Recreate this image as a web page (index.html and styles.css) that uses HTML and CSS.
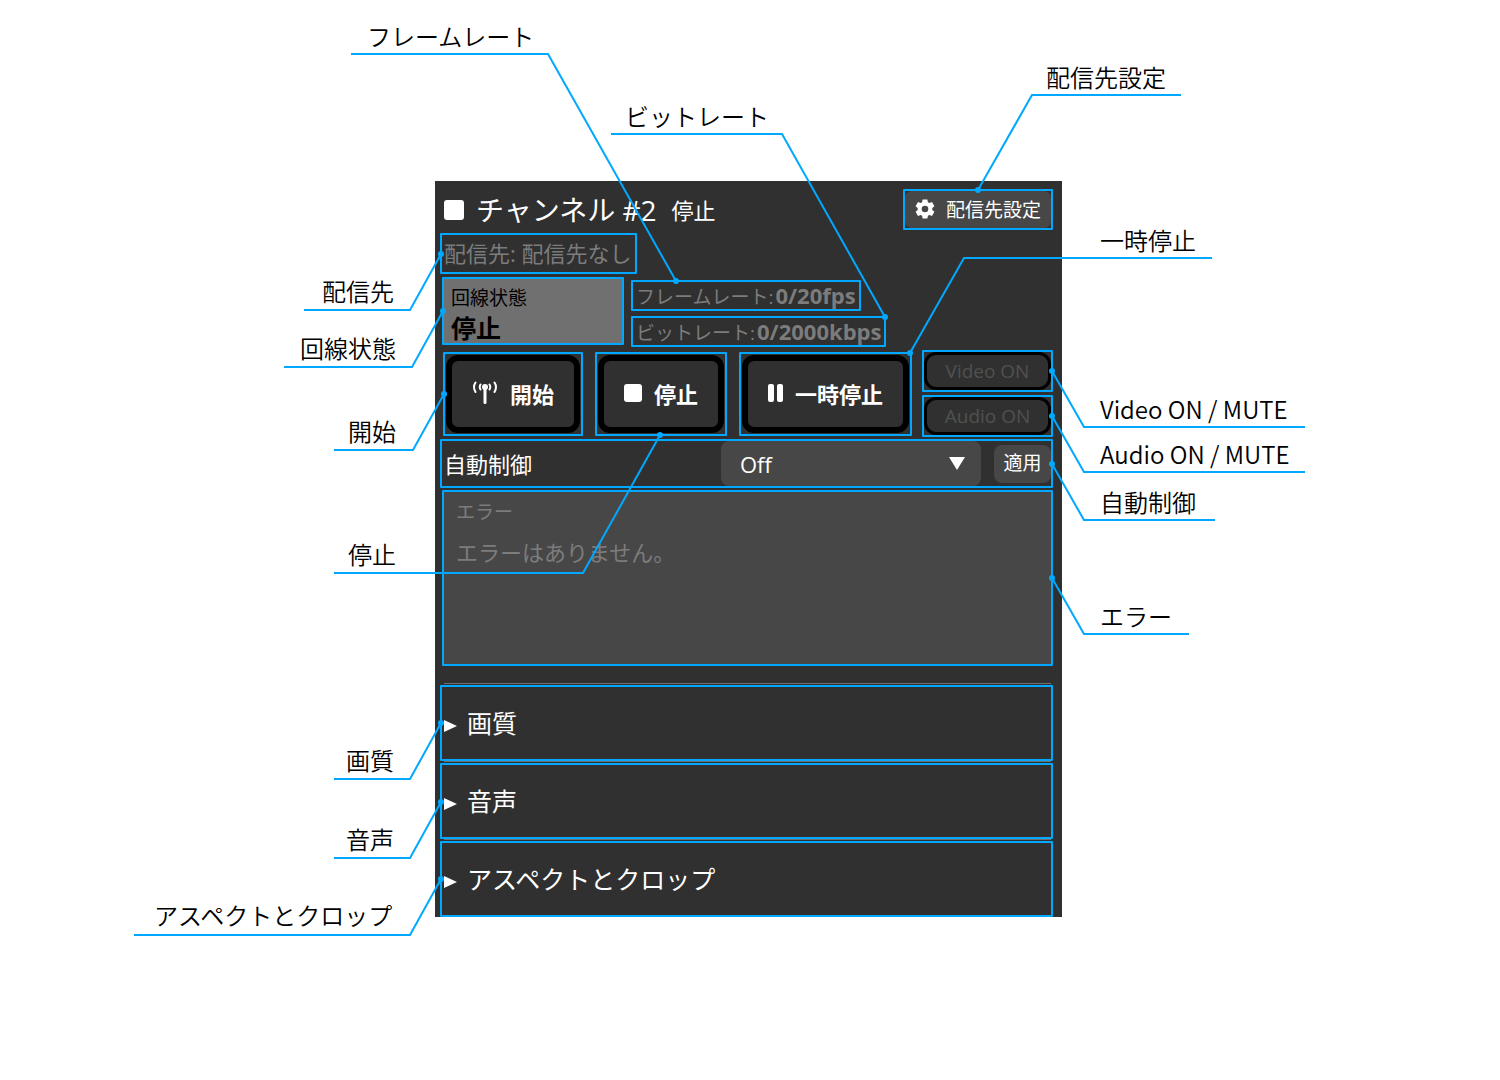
FILE: index.html
```html
<!DOCTYPE html>
<html lang="ja">
<head>
    <meta charset="UTF-8">
    <meta name="viewport" content="width=device-width, initial-scale=1.0">
    <title>チャンネル #2</title>
    <link rel="stylesheet" href="styles.css">
</head>
<body>
<main class="diagram">
    <section class="panel">
        <header class="panel-header">
            <svg class="status-icon" viewBox="0 0 20 20"><rect width="20" height="20" rx="3"/></svg>
            <h1>チャンネル #2</h1>
            <span class="state">停止</span>
            <div class="mark settings-mark">
                <button class="settings-btn">
                    <svg class="gear" viewBox="0 0 20 20"><path fill-rule="evenodd" d="M7.6 0.5h4.8l.5 2.7 1.5.9 2.6-1 2.4 4.2-2.1 1.8v1.8l2.1 1.8-2.4 4.2-2.6-1-1.5.9-.5 2.7H7.600l-.5-2.700-1.500-.9-2.600 1L.6 12.700l2.100-1.800V9.100L.6 7.300 3 3.100l2.600 1 1.500-.9zM10 6.700a3.300 3.300 0 1 0 0 6.600 3.300 3.300 0 0 0 0-6.600z"/></svg>
                    配信先設定
                </button>
            </div>
        </header>

        <div class="mark destination">配信先: 配信先なし</div>

        <div class="status-row">
            <div class="mark line-status">
                <span>回線状態</span>
                <strong>停止</strong>
            </div>
            <div class="rates">
                <div class="mark rate">フレームレート:<strong>0/20fps</strong></div>
                <div class="mark rate">ビットレート:<strong>0/2000kbps</strong></div>
            </div>
        </div>

        <div class="controls">
            <div class="actions">
                <div class="mark">
                    <button class="action-btn">
                        <svg class="antenna" viewBox="0 0 26 24">
                            <path class="mast" d="M13 6v15.500"/>
                            <path d="M8.500 3.500q-1.500 2.500 0 5M17.500 3.500q1.500 2.500 0 5M3.500 1.500q-3 4.500 0 9.500M22.500 1.500q3 4.500 0 9.500"/>
                            <circle cx="13" cy="6" r="3"/>
                        </svg>
                        開始
                    </button>
                </div>
                <div class="mark">
                    <button class="action-btn">
                        <svg class="stop" viewBox="0 0 18 18"><rect width="18" height="18" rx="3"/></svg>
                        停止
                    </button>
                </div>
                <div class="mark">
                    <button class="action-btn">
                        <svg class="pause" viewBox="0 0 15 18"><rect width="6" height="18" rx="2"/><rect x="9" width="6" height="18" rx="2"/></svg>
                        一時停止
                    </button>
                </div>
            </div>
            <div class="toggles">
                <div class="mark"><button class="toggle-btn" disabled>Video ON</button></div>
                <div class="mark"><button class="toggle-btn" disabled>Audio ON</button></div>
            </div>
        </div>

        <div class="mark auto-control">
            <label for="auto">自動制御</label>
            <div class="select-wrap">
                <select id="auto">
                    <option>Off</option>
                </select>
                <svg class="arrow" viewBox="0 0 16 13"><path d="M0 0h16L8 13z"/></svg>
            </div>
            <button class="apply-btn">適用</button>
        </div>

        <div class="mark errors">
            <h2>エラー</h2>
            <p>エラーはありません。</p>
        </div>

        <div class="sections">
            <details>
                <summary class="mark"><svg class="caret" viewBox="0 0 13 12"><path d="M0 0l13 6-13 6z"/></svg>画質</summary>
            </details>
            <details>
                <summary class="mark"><svg class="caret" viewBox="0 0 13 12"><path d="M0 0l13 6-13 6z"/></svg>音声</summary>
            </details>
            <details>
                <summary class="mark"><svg class="caret" viewBox="0 0 13 12"><path d="M0 0l13 6-13 6z"/></svg>アスペクトとクロップ</summary>
            </details>
        </div>
    </section>

    <!-- Callouts -->
    <svg class="callouts" viewBox="0 0 1500 1080">
        <g class="leaders">
            <polyline points="351,54 548,54 676,281"/>
            <polyline points="611,134 782,134 885,317"/>
            <polyline points="1181,95 1032,95 978,190"/>
            <polyline points="1212,258 964,258 910,353"/>
            <polyline points="304,310 410,310 441,254"/>
            <polyline points="284,367 412,367 443,311"/>
            <polyline points="334,450 413,450 444,394"/>
            <polyline points="334,573 583,573 660,435"/>
            <polyline points="334,779 410,779 441,723"/>
            <polyline points="334,858 410,858 441,802"/>
            <polyline points="134,935 410,935 441,879"/>
            <polyline points="1305,427 1084,427 1052,371"/>
            <polyline points="1305,472 1084,472 1052,416"/>
            <polyline points="1215,520 1084,520 1052,464"/>
            <polyline points="1189,634 1084,634 1052,578"/>
        </g>
        <g class="dots">
            <circle cx="676" cy="281" r="3"/>
            <circle cx="885" cy="317" r="3"/>
            <circle cx="978" cy="190" r="3"/>
            <circle cx="910" cy="353" r="3"/>
            <circle cx="441" cy="254" r="3"/>
            <circle cx="443" cy="311" r="3"/>
            <circle cx="444" cy="394" r="3"/>
            <circle cx="660" cy="435" r="3"/>
            <circle cx="441" cy="723" r="3"/>
            <circle cx="441" cy="802" r="3"/>
            <circle cx="441" cy="879" r="3"/>
            <circle cx="1052" cy="371" r="3"/>
            <circle cx="1052" cy="416" r="3"/>
            <circle cx="1052" cy="464" r="3"/>
            <circle cx="1052" cy="578" r="3"/>
        </g>
        <g class="labels">
            <text x="367" y="46">フレームレート</text>
            <text x="625" y="126">ビットレート</text>
            <text x="1046" y="87">配信先設定</text>
            <text x="1100" y="250">一時停止</text>
            <text x="322" y="301">配信先</text>
            <text x="300" y="358">回線状態</text>
            <text x="348" y="441">開始</text>
            <text x="348" y="564">停止</text>
            <text x="346" y="770">画質</text>
            <text x="346" y="849">音声</text>
            <text x="154" y="925">アスペクトとクロップ</text>
            <text x="1100" y="419">Video ON / MUTE</text>
            <text x="1100" y="464">Audio ON / MUTE</text>
            <text x="1100" y="512">自動制御</text>
            <text x="1100" y="626">エラー</text>
        </g>
    </svg>
</main>
</body>
</html>
```
FILE: styles.css
```css
* {
    box-sizing: border-box;
}

body {
    margin: 0;
    background-color: #fff;
    font-family: "Open Sans", "Noto Sans CJK JP", sans-serif;
}

.diagram {
    position: relative;
    min-height: 1080px;
    padding: 181px 3px 0 0;
    overflow: hidden;
}

.panel {
    max-width: 627px;
    margin: 0 auto;
    padding: 8px 9px 0 5px;
    background-color: #303030;
    color: #fff;
    font-size: 22px;
    line-height: 30px;
}

/* Blue frame round each part that has a callout */
.mark {
    border: 2px solid #00a8ff;
    border-radius: 1px;
}

button,
select {
    margin: 0;
    border: none;
    color: #fff;
    font-family: inherit;
    cursor: pointer;
}

svg {
    flex: none;
    fill: #fff;
}

.panel-header {
    display: flex;
    align-items: center;
    height: 41px;
    padding-left: 4px;
}

.status-icon {
    width: 20px;
    height: 20px;
}

h1 {
    margin: 0 15px 0 12px;
    font-size: 28px;
    font-weight: 400;
}

.settings-mark {
    margin-left: auto;
}

.settings-btn {
    display: flex;
    align-items: center;
    gap: 11px;
    height: 37px;
    padding: 0 10px 2px;
    background-color: #474747;
    border-radius: 7px;
    font-size: 19px;
}

.gear {
    width: 20px;
    height: 20px;
}

.destination {
    width: fit-content;
    height: 41px;
    margin: 3px 0;
    padding: 3px 3px 3px 2px;
    color: #7c7c7c;
}

.status-row {
    display: flex;
    gap: 7px;
    padding-left: 2px;
}

.line-status {
    display: flex;
    flex-direction: column;
    width: 182px;
    height: 68px;
    padding: 4px 7px;
    background-color: #707070;
    color: #000;
    font-size: 19px;
}

.line-status strong {
    font-size: 25px;
}

.rates {
    display: flex;
    flex-direction: column;
    align-items: flex-start;
    gap: 5px;
    padding-top: 3px;
}

.rate {
    height: 31px;
    padding: 0 3px;
    color: #7c7c7c;
    font-size: 19px;
    line-height: 26px;
}

.rate strong {
    margin-left: 2px;
    font-size: 22px;
}

.controls {
    display: flex;
    justify-content: space-between;
    margin: 3px 0 2px;
}

.actions {
    display: flex;
    gap: 12px;
    padding: 2px 0 0 3px;
}

.actions .mark {
    height: 84px;
    padding: 1px;
}

.action-btn {
    display: flex;
    align-items: center;
    gap: 12px;
    height: 78px;
    padding: 0 20px 3px;
    background-color: #303030;
    border: 6px solid #000;
    border-radius: 12px;
    font-size: 22px;
    font-weight: 700;
}

.antenna {
    width: 26px;
    height: 24px;
}

.antenna path {
    fill: none;
    stroke: #fff;
    stroke-width: 2;
    stroke-linecap: round;
}

.antenna .mast {
    stroke-width: 3;
}

.stop {
    width: 18px;
    height: 18px;
}

.pause {
    width: 15px;
    height: 18px;
}

.toggles {
    display: flex;
    flex-direction: column;
    gap: 3px;
    width: 131px;
}

.toggles .mark {
    height: 42px;
}

.toggle-btn {
    width: 100%;
    height: 38px;
    background-color: #303030;
    border: 3px solid #000;
    border-radius: 12px;
    color: #505050;
    font-size: 19px;
}

.auto-control {
    display: flex;
    align-items: center;
    height: 49px;
    padding-left: 2px;
}

.select-wrap {
    position: relative;
    width: 260px;
    margin: 0 13px 0 auto;
}

select {
    width: 100%;
    height: 45px;
    padding: 0 19px;
    appearance: none;
    background-color: #474747;
    border-radius: 8px;
    font-size: 22px;
}

.arrow {
    position: absolute;
    top: 16px;
    right: 16px;
    width: 16px;
    height: 13px;
    pointer-events: none;
}

.apply-btn {
    width: 57px;
    height: 38px;
    padding: 0 0 3px;
    background-color: #474747;
    border-radius: 8px;
    font-size: 19px;
}

.errors {
    height: 176px;
    margin: 2px 0 17px 2px;
    padding: 5px 12px;
    background-color: #474747;
    color: #7c7c7c;
}

.errors h2 {
    margin: 0 0 10px;
    font-size: 19px;
    font-weight: 400;
}

.errors p {
    margin: 0;
}

details {
    background: linear-gradient(#707070, #707070) 4px 0 / calc(100% - 6px) 1px no-repeat;
    padding-top: 2px;
}

summary {
    display: flex;
    align-items: center;
    gap: 10px;
    height: 76px;
    padding-left: 2px;
    font-size: 25px;
    list-style: none;
    cursor: pointer;
}

.caret {
    width: 13px;
    height: 12px;
    margin-top: 6px;
}

/* Callout layer keeps its centre on the panel */
.callouts {
    position: absolute;
    top: 0;
    left: 50%;
    width: 1500px;
    height: 1080px;
    transform: translateX(-50%);
    pointer-events: none;
}

.leaders {
    fill: none;
    stroke: #00a8ff;
    stroke-width: 2;
}

.dots {
    fill: #00a8ff;
}

.labels {
    fill: #000;
    font-family: "Noto Sans CJK JP", sans-serif;
    font-size: 24px;
    font-weight: 350;
}
```
